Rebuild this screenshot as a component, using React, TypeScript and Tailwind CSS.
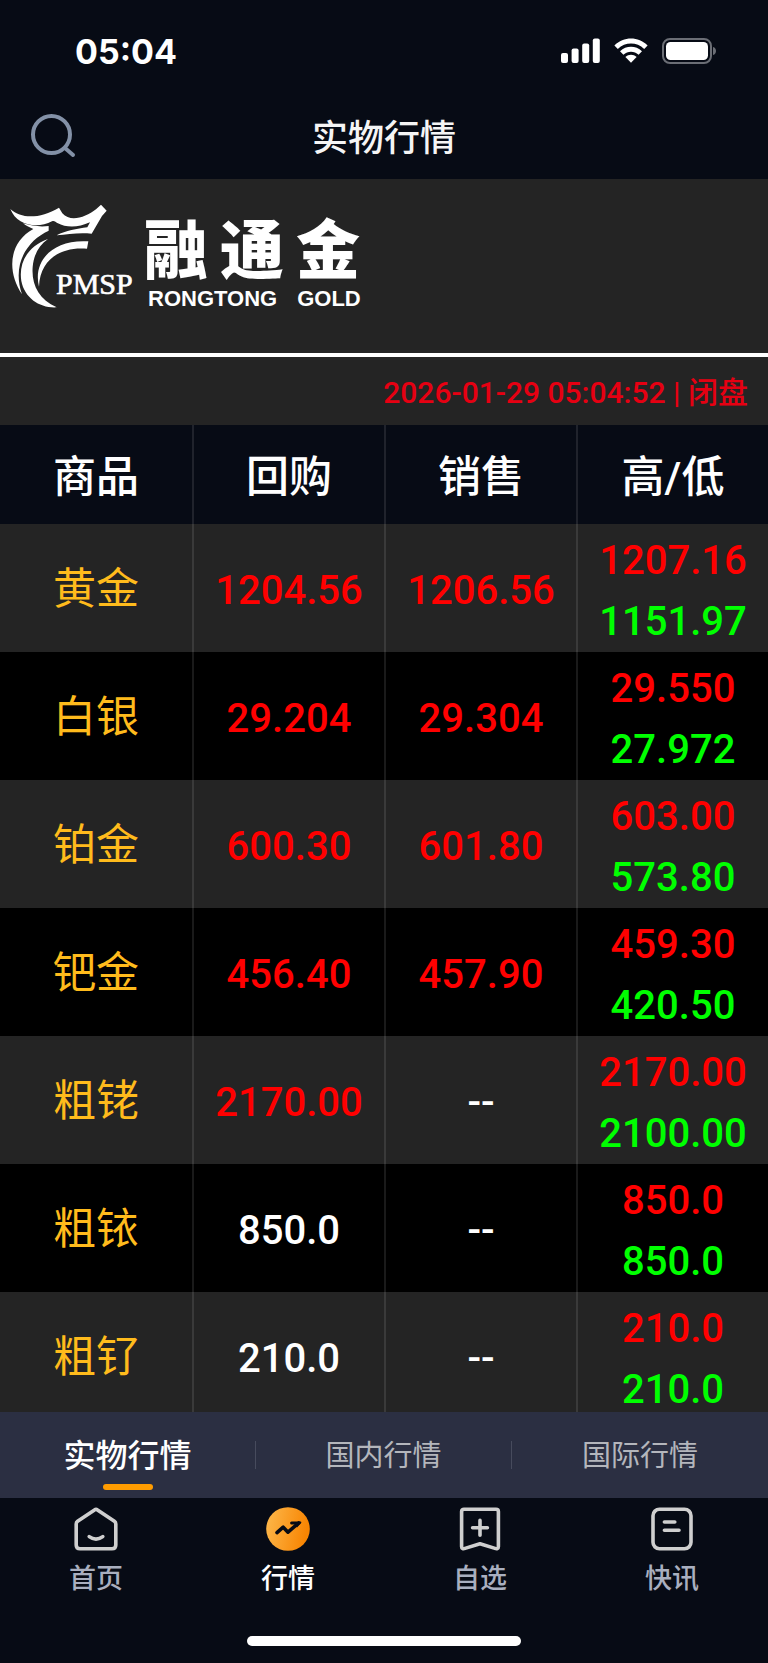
import { useState } from "react";

type Trend = "up" | "flat";

interface Quote {
  name: string;
  buy: string;
  sell: string;
  high: string;
  low: string;
  trend: Trend;
}

const quotes: Quote[] = [
  { name: "黄金", buy: "1204.56", sell: "1206.56", high: "1207.16", low: "1151.97", trend: "up" },
  { name: "白银", buy: "29.204", sell: "29.304", high: "29.550", low: "27.972", trend: "up" },
  { name: "铂金", buy: "600.30", sell: "601.80", high: "603.00", low: "573.80", trend: "up" },
  { name: "钯金", buy: "456.40", sell: "457.90", high: "459.30", low: "420.50", trend: "up" },
  { name: "粗铑", buy: "2170.00", sell: "--", high: "2170.00", low: "2100.00", trend: "up" },
  { name: "粗铱", buy: "850.0", sell: "--", high: "850.0", low: "850.0", trend: "flat" },
  { name: "粗钌", buy: "210.0", sell: "--", high: "210.0", low: "210.0", trend: "flat" },
];

const columns = ["商品", "回购", "销售", "高/低"];
const markets = ["实物行情", "国内行情", "国际行情"];

const StatusBar = () => (
  <div className="flex h-[94px] shrink-0 items-center justify-between pt-2 pl-[75px] pr-[51px]">
    <span className="pt-[2px] font-['Inter',sans-serif] text-[34px] font-bold leading-none">05:04</span>
    <div className="flex items-center gap-[14px]">
      {/* Signal */}
      <svg width="39" height="26" viewBox="0 0 39 26" fill="#fff">
        <rect x="0" y="15" width="7" height="10" rx="2" />
        <rect x="10.6" y="10.5" width="7" height="14.5" rx="2" />
        <rect x="21.2" y="5.5" width="7" height="19.5" rx="2" />
        <rect x="31.8" y="0.5" width="7" height="24.5" rx="2" />
      </svg>
      {/* Wifi */}
      <svg width="34" height="26" viewBox="0 0 34 26" fill="#fff">
        <path d="M0.4 7.4 C9.6 -1.8 24.4 -1.8 33.6 7.4 L30.2 10.9 C22.8 3.8 11.2 3.8 3.8 10.9 Z" />
        <path d="M6 13.2 C12.2 7.3 21.8 7.3 28 13.2 L24.6 16.7 C20.3 12.8 13.7 12.8 9.4 16.7 Z" />
        <path d="M11.4 18.9 C14.6 16 19.4 16 22.6 18.9 L17 24.8 Z" />
      </svg>
      {/* Battery */}
      <svg width="55" height="26" viewBox="0 0 55 26">
        <rect x="1" y="1" width="48" height="24" rx="7" fill="none" stroke="#6b6e75" strokeWidth="2" />
        <rect x="4" y="4" width="42" height="18" rx="4.5" fill="#fff" />
        <path d="M51 9 C55 10 55 16 51 17 Z" fill="#6b6e75" />
      </svg>
    </div>
  </div>
);

const BrandLogo = () => (
  <svg width="136" height="125" viewBox="0 0 408 375" fill="#fff">
    <path d="M31 42 C66 74 122 70 177 38 L187 55 C212 84 258 66 288 43 L303 29 L320 47 L306 63 L275 116 C240 112 205 117 170 121 C198 107 230 101 262 97 L270 82 C234 98 200 99 172 84 C164 79 162 76 156 79 C112 102 50 92 31 42 Z" />
    <path d="M69 85 C96 93 120 96 146 93 L146 107 C84 135 34 205 66 298 C20 230 26 142 100 102 C90 98 78 93 69 85 Z" />
    <path d="M144 132 C78 156 56 208 64 258 C74 310 120 340 170 337 C116 313 94 268 98 216 C101 180 116 152 144 132 Z" />
    <path d="M265 139 L261 161 C184 154 120 192 117 275 C98 200 156 132 265 139 Z" />
    <text x="168" y="297" fontSize="90" fontFamily="'Liberation Serif', serif" stroke="#fff" strokeWidth="2">
      PMSP
    </text>
  </svg>
);

const HomeIcon = () => (
  <svg width="44" height="44" viewBox="0 0 44 44" fill="none" stroke="#cfcfcf" strokeWidth="3.6" strokeLinecap="round" strokeLinejoin="round">
    <path d="M20.5 2.9 L3.6 14.2 C2.5 15 2.2 15.8 2.2 17 V38 C2.2 40.4 3.6 41.8 6 41.8 H38 C40.4 41.8 41.8 40.4 41.8 38 V17 C41.8 15.8 41.5 15 40.4 14.2 L23.5 2.9 C22.5 2.2 21.5 2.2 20.5 2.9 Z" />
    <path d="M15.2 29.6 C19.5 32.8 24.5 32.8 28.8 29.6" />
  </svg>
);

const MarketIcon = () => (
  <svg width="44" height="44" viewBox="0 0 44 44">
    <defs>
      <linearGradient id="market-fill" x1="0" y1="0" x2="1" y2="0.2">
        <stop offset="0" stopColor="#fdb94d" />
        <stop offset="1" stopColor="#f88502" />
      </linearGradient>
    </defs>
    <circle cx="22" cy="22" r="21.8" fill="url(#market-fill)" />
    <path d="M11 25.6 L17.2 20.2 L22 25.2 L32.6 16" fill="none" stroke="#070b15" strokeWidth="3.6" strokeLinecap="round" strokeLinejoin="round" />
    <path d="M25.6 14.4 H34.4 C35.4 14.4 35.6 15.4 35 16.2 L31 20.4 L28.6 17.6 H25.6 C23.6 17.6 23.6 14.4 25.6 14.4 Z" fill="#070b15" />
  </svg>
);

const WatchlistIcon = () => (
  <svg width="44" height="44" viewBox="0 0 44 44" fill="none" stroke="#cfcfcf" strokeWidth="3.6" strokeLinecap="round" strokeLinejoin="round">
    <path d="M6 2.2 H38 C39.4 2.2 40.4 3.2 40.4 4.6 V39.4 C40.4 41.4 39 42.2 37 41.4 L22 36.8 L7 41.4 C5 42.2 3.6 41.4 3.6 39.4 V4.6 C3.6 3.2 4.6 2.2 6 2.2 Z" />
    <path d="M14.6 20.8 H29.4 M22 13.4 V28.2" />
  </svg>
);

const NewsIcon = () => (
  <svg width="44" height="44" viewBox="0 0 44 44" fill="none" stroke="#cfcfcf" strokeWidth="3.6" strokeLinecap="round">
    <rect x="3" y="2.2" width="38" height="39.6" rx="6.5" />
    <path d="M14.4 15 H24.8 M14.4 23.2 H29" />
  </svg>
);

const navItems = [
  { label: "首页", Icon: HomeIcon },
  { label: "行情", Icon: MarketIcon },
  { label: "自选", Icon: WatchlistIcon },
  { label: "快讯", Icon: NewsIcon },
];

const QuoteRow = ({ quote }: { quote: Quote }) => {
  const priceColor = quote.trend === "up" ? "text-[#ff0000]" : "text-white";
  const sellColor = quote.sell === "--" ? "text-white" : priceColor;
  const cell = "border-l-2 border-white/10 p-0 pt-[5px]";

  return (
    <tr className="h-[128px] bg-black odd:bg-[#242424]">
      <th scope="row" className="p-0 pt-[2px] text-[43px] font-normal leading-none text-[#ffbb1c]">
        {quote.name}
      </th>
      <td className={`${cell} ${priceColor}`}>{quote.buy}</td>
      <td className={`${cell} ${sellColor}`}>{quote.sell}</td>
      <td className={cell}>
        <div className="text-[#ff0000]">{quote.high}</div>
        <div className="text-[#00ff00]">{quote.low}</div>
      </td>
    </tr>
  );
};

const App = () => {
  const [market, setMarket] = useState("实物行情");
  const [page, setPage] = useState("行情");

  return (
    <div className="flex h-screen flex-col bg-[#070b15] font-['Noto_Sans_CJK_SC',sans-serif] text-white">
      <StatusBar />

      {/* Title bar */}
      <header className="grid h-[85px] shrink-0 grid-cols-[1fr_auto_1fr] items-center px-[30px]">
        <button aria-label="搜索" className="w-fit">
          <svg width="48" height="48" viewBox="0 0 48 48" fill="none" stroke="#8391a7" strokeWidth="4" strokeLinecap="round">
            <circle cx="21.5" cy="21.5" r="18.5" />
            <path d="M35 35 L43 42" />
          </svg>
        </button>
        <h1 className="pb-1 text-[36px] font-medium leading-none text-[#f5f5f5]">实物行情</h1>
      </header>

      {/* Brand banner */}
      <div className="flex h-[178px] shrink-0 border-b-4 border-white bg-[#242424] pt-4">
        <BrandLogo />
        <div className="flex flex-col pt-3 pl-2">
          <div className="flex gap-3 text-[64px] font-black leading-[76px]">
            <span>融</span>
            <span>通</span>
            <span>金</span>
          </div>
          <div className="flex gap-5 pt-1 pl-1 font-['Liberation_Sans',sans-serif] text-[22px] font-bold leading-6">
            <span>RONGTONG</span>
            <span>GOLD</span>
          </div>
        </div>
      </div>

      <div className="flex h-[68px] shrink-0 items-center justify-end bg-[#242424] pt-1 pr-5 font-['Roboto','Noto_Sans_CJK_SC',sans-serif] text-[30px] font-medium leading-none text-[#e60012]">
        2026-01-29 05:04:52 | 闭盘
      </div>

      <main className="min-h-0 flex-1 overflow-y-auto [scrollbar-width:none]">
        <table className="w-full table-fixed border-separate border-spacing-0 text-center font-['Roboto','Noto_Sans_CJK_SC',sans-serif] text-[40px] font-medium leading-[61px]">
          <thead>
            <tr className="h-[99px]">
              {columns.map((column) => (
                <th
                  key={column}
                  scope="col"
                  className="border-l-2 border-white/10 p-0 pt-[5px] text-[43px] font-medium leading-none first:border-l-0"
                >
                  {column}
                </th>
              ))}
            </tr>
          </thead>
          <tbody>
            {quotes.map((quote) => (
              <QuoteRow key={quote.name} quote={quote} />
            ))}
          </tbody>
        </table>
      </main>

      {/* Market tabs */}
      <div role="tablist" className="flex h-[86px] shrink-0 items-center bg-[#2b2f42]">
        {markets.map((item) => (
          <button
            key={item}
            role="tab"
            aria-selected={market === item}
            onClick={() => setMarket(item)}
            className="group flex h-full flex-1 items-center"
          >
            <span
              className={`relative flex h-full flex-1 items-center justify-center pb-1 leading-none ${
                market === item ? "text-[32px] font-medium text-white" : "text-[29px] text-[#b4b6bc]"
              }`}
            >
              {item}
              {market === item && (
                <span className="absolute bottom-2 left-1/2 h-[6px] w-[50px] -translate-x-1/2 rounded-full bg-[#ff9c00]" />
              )}
            </span>
            <span className="h-7 w-px bg-[#474b5d] group-last:hidden" />
          </button>
        ))}
      </div>

      {/* Bottom navigation */}
      <nav className="flex h-[138px] shrink-0 pt-[9px]">
        {navItems.map(({ label, Icon }) => (
          <button
            key={label}
            onClick={() => setPage(label)}
            className={`flex flex-1 flex-col items-center gap-[10px] text-[27px] font-medium leading-8 ${
              page === label ? "text-white" : "text-[#a9afbf]"
            }`}
          >
            <Icon />
            {label}
          </button>
        ))}
      </nav>

      {/* Home indicator */}
      <div className="flex h-[27px] shrink-0 justify-center">
        <div className="h-[10px] w-[274px] rounded-full bg-white" />
      </div>
    </div>
  );
};

export default App;
